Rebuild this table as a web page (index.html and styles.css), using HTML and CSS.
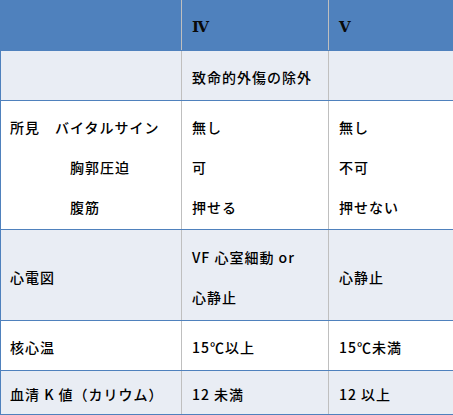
FILE: index.html
```html
<!DOCTYPE html>
<html lang="ja">
<head>
<meta charset="utf-8">
<title>表</title>
<link rel="stylesheet" href="styles.css">
</head>
<body>
<table class="grid">
  <colgroup>
    <col class="c1">
    <col class="c2">
    <col class="c3">
  </colgroup>
  <tr class="head">
    <th></th>
    <th>Ⅳ</th>
    <th>Ⅴ</th>
  </tr>
  <tr class="r1 alt">
    <td></td>
    <td>致命的外傷の除外</td>
    <td></td>
  </tr>
  <tr class="r2">
    <td>
      <div>所見　バイタルサイン</div>
      <div class="sub">胸郭圧迫</div>
      <div class="sub">腹筋</div>
    </td>
    <td>
      <div>無し</div>
      <div>可</div>
      <div>押せる</div>
    </td>
    <td>
      <div>無し</div>
      <div>不可</div>
      <div>押せない</div>
    </td>
  </tr>
  <tr class="r3 alt">
    <td>心電図</td>
    <td>
      <div>VF 心室細動 or</div>
      <div>心静止</div>
    </td>
    <td>心静止</td>
  </tr>
  <tr class="r4">
    <td>核心温</td>
    <td>15℃以上</td>
    <td>15℃未満</td>
  </tr>
  <tr class="r5 alt">
    <td>血清 K 値（カリウム）</td>
    <td>12 未満</td>
    <td>12 以上</td>
  </tr>
</table>
</body>
</html>
```
FILE: styles.css
```css
html, body {
  margin: 0;
  padding: 0;
  background: #ffffff;
}

.grid {
  border-collapse: collapse;
  table-layout: fixed;
  width: 453px;
  font-family: "Noto Sans CJK JP", "Noto Sans", sans-serif;
  font-size: 14px;
  font-weight: 500;
  letter-spacing: 1px;
  color: #000000;
}

.c1 { width: 181px; }
.c2 { width: 147px; }
.c3 { width: 125px; }

.grid th,
.grid td {
  border-left: 1px solid #bfbfbf;
  border-right: 1px solid #bfbfbf;
  border-top: 1px solid #4f81bd;
  border-bottom: 1px solid #4f81bd;
  padding: 3px 10px 0 10px;
  line-height: 40px;
  vertical-align: middle;
  text-align: left;
}

.grid th:first-child,
.grid td:first-child {
  border-left: 1px solid #4f81bd;
  padding-left: 9px;
}

.grid th:last-child,
.grid td:last-child {
  border-right: 1px solid #4f81bd;
}

.head th {
  background: #4f81bd;
  height: 47px;
  border-top: none;
  font-family: "DejaVu Serif", "Liberation Serif", serif;
  font-weight: bold;
  font-size: 15px;
  letter-spacing: 0;
  color: #0a0a0a;
}

.alt td {
  background: #e9edf4;
}

.r1 td { height: 46px; }
.r2 td { height: 125px; }
.r3 td { height: 87px; }
.r4 td { height: 46px; }
.r5 td { height: 40px; }

.sub {
  padding-left: 60px;
}
```
